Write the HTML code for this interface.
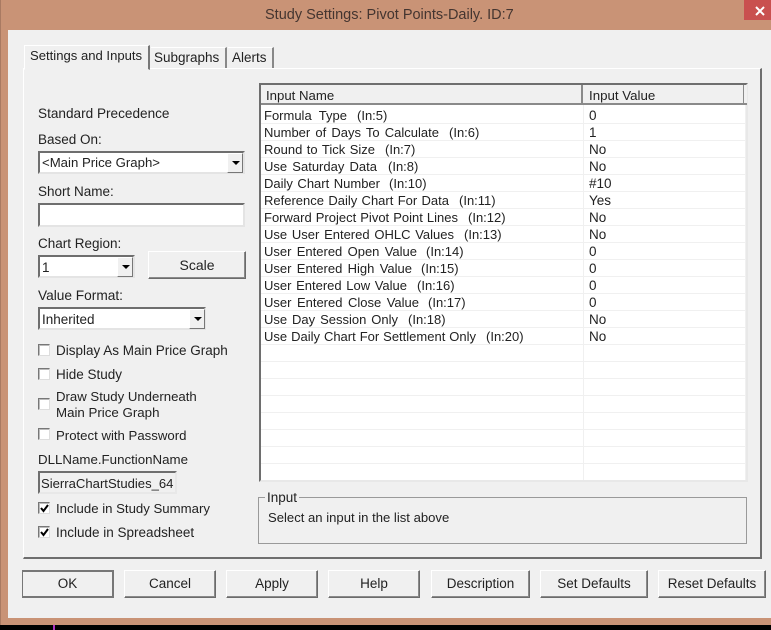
<!DOCTYPE html>
<html><head><meta charset="utf-8"><style>
html,body{margin:0;padding:0;background:#000;}
#r{position:relative;width:771px;height:630px;overflow:hidden;background:#000;font-family:"Liberation Sans",sans-serif;font-size:13.5px;color:#222;}
#r div{position:absolute;box-sizing:border-box;}
.t{white-space:nowrap;line-height:16px;height:16px;}
.n{white-space:normal;line-height:16px;height:16px;left:264px;font-size:13px;text-align:justify;text-align-last:justify;}
.i{white-space:nowrap;line-height:16px;height:16px;font-size:13px;}
.v{white-space:nowrap;line-height:16px;height:16px;left:589px;}
.btn{background:#f0f0f0;border:1px solid;border-color:#fff #6b6b6b #6b6b6b #fff;box-shadow:inset -1px -1px 0 #8a8a8a;text-align:center;line-height:26px;font-size:13.5px;}
.cb{width:12px;height:12px;background:#fff;border:1px solid;border-color:#777 #ddd #ddd #777;box-shadow:inset 1px 1px 0 #bbb;}
.field{background:#fff;border:2px solid;border-color:#6e6e6e #e4e4e4 #e4e4e4 #6e6e6e;}
.arrow{background:#f0f0f0;border:1px solid;border-color:#fff #777 #777 #fff;}
.arrow:after{content:"";position:absolute;left:4px;top:7px;border:4px solid transparent;border-top:4px solid #000;border-bottom:0;}
.ln{height:1px;left:261px;width:484px;background:#f0f0f0;}
</style></head><body><div id="r">
<div style="left:0;top:0;width:771px;height:625px;background:#c99376"></div>
<div style="left:0;top:0;width:1px;height:625px;background:#a97a62"></div>
<div style="left:53px;top:625px;width:2px;height:5px;background:#b030c0"></div>
<div style="left:744px;top:0;width:27px;height:20px;background:#c9504f"></div>
<svg style="position:absolute;left:754px;top:5px" width="12" height="12"><path d="M2 2L10 10M10 2L2 10" stroke="#fff" stroke-width="2"/></svg>
<div class="t" style="left:265px;top:7px;font-size:14.5px;color:#443530">Study Settings: Pivot Points-Daily. ID:7</div>
<div style="left:8px;top:30px;width:763px;height:588px;background:#f0f0f0"></div>

<div style="left:23px;top:68px;width:739px;height:491px;border:1px solid;border-color:#fff #6e6e6e #6e6e6e #fff;border-width:1px 2px 2px 1px"></div>
<div style="left:24px;top:45px;width:126px;height:25px;background:#f0f0f0;border:1px solid;border-color:#fff #777 transparent #fff;border-right-width:2px"></div>
<div style="left:151px;top:47px;width:76px;height:21px;border-right:2px solid #888;border-top:1px solid #fff"></div>
<div style="left:228px;top:47px;width:46px;height:21px;border-right:2px solid #888;border-top:1px solid #fff"></div>
<div class="t" style="left:30px;top:48px;font-size:13.1px">Settings and Inputs</div>
<div class="t" style="left:154px;top:50px">Subgraphs</div>
<div class="t" style="left:232px;top:50px">Alerts</div>

<div class="t" style="left:38px;top:106px;font-size:13.6px">Standard Precedence</div>
<div class="t" style="left:38px;top:132px">Based On:</div>
<div class="field" style="left:38px;top:151px;width:207px;height:23px"></div>
<div class="t" style="left:42px;top:155px;font-size:13.2px;top:155px">&lt;Main Price Graph&gt;</div>
<div class="arrow" style="left:227px;top:153px;width:16px;height:20px"></div>
<div class="t" style="left:38px;top:184px">Short Name:</div>
<div class="field" style="left:38px;top:203px;width:207px;height:24px"></div>
<div class="t" style="left:38px;top:236px">Chart Region:</div>
<div class="field" style="left:38px;top:255px;width:97px;height:23px"></div>
<div class="t" style="left:42px;top:260px">1</div>
<div class="arrow" style="left:117px;top:257px;width:16px;height:20px"></div>
<div class="btn" style="left:148px;top:251px;width:98px;height:28px;font-size:14px">Scale</div>
<div class="t" style="left:38px;top:288px;font-size:13.7px">Value Format:</div>
<div class="field" style="left:38px;top:307px;width:168px;height:23px"></div>
<div class="t" style="left:42px;top:312px">Inherited</div>
<div class="arrow" style="left:189px;top:309px;width:16px;height:20px"></div>

<div class="cb" style="left:38px;top:344px"></div><div class="t" style="left:56px;top:343px">Display As Main Price Graph</div>
<div class="cb" style="left:38px;top:368px"></div><div class="t" style="left:56px;top:367px">Hide Study</div>
<div class="cb" style="left:38px;top:398px"></div>
<div class="t" style="left:56px;top:389px;font-size:13.2px">Draw Study Underneath</div>
<div class="t" style="left:56px;top:405px;font-size:13.3px">Main Price Graph</div>
<div class="cb" style="left:38px;top:428px"></div><div class="t" style="left:56px;top:428px;font-size:13.2px">Protect with Password</div>
<div class="t" style="left:38px;top:452px;font-size:13.3px">DLLName.FunctionName</div>
<div style="left:38px;top:471px;width:139px;height:23px;background:#f0f0f0;border:2px solid;border-color:#6e6e6e #e8e8e8 #e8e8e8 #6e6e6e"></div>
<div class="t" style="left:41px;top:476px;font-size:13.1px">SierraChartStudies_64</div>
<div class="cb" style="left:38px;top:502px"></div>
<svg style="position:absolute;left:39px;top:503px" width="11" height="11"><path d="M2 5L4.5 8L9 2" fill="none" stroke="#000" stroke-width="2"/></svg>
<div class="t" style="left:56px;top:501px;font-size:13.2px">Include in Study Summary</div>
<div class="cb" style="left:38px;top:526px"></div>
<svg style="position:absolute;left:39px;top:527px" width="11" height="11"><path d="M2 5L4.5 8L9 2" fill="none" stroke="#000" stroke-width="2"/></svg>
<div class="t" style="left:56px;top:525px">Include in Spreadsheet</div>

<div style="left:259px;top:83px;width:489px;height:399px;background:#fff;border:2px solid;border-color:#6e6e6e #e8e8e8 #e8e8e8 #6e6e6e"></div>
<div style="left:261px;top:85px;width:486px;height:20px;background:#f0f0f0;border-bottom:2px solid #8a8a8a"></div>
<div style="left:581px;top:85px;width:2px;height:19px;background:#8a8a8a"></div>
<div style="left:743px;top:85px;width:1px;height:19px;background:#8a8a8a"></div>
<div class="t" style="left:266px;top:88px;font-size:13.2px">Input Name</div>
<div class="t" style="left:589px;top:88px;font-size:13.3px">Input Value</div>
<div style="left:583px;top:105px;width:1px;height:375px;background:#f0f0f0"></div>
<div style="left:745px;top:105px;width:1px;height:375px;background:#f0f0f0"></div>

<div class="ln" style="top:123px"></div><div class="ln" style="top:140px"></div><div class="ln" style="top:157px"></div><div class="ln" style="top:174px"></div><div class="ln" style="top:191px"></div><div class="ln" style="top:208px"></div><div class="ln" style="top:225px"></div><div class="ln" style="top:242px"></div><div class="ln" style="top:259px"></div><div class="ln" style="top:276px"></div><div class="ln" style="top:293px"></div><div class="ln" style="top:310px"></div><div class="ln" style="top:327px"></div><div class="ln" style="top:344px"></div><div class="ln" style="top:361px"></div><div class="ln" style="top:378px"></div><div class="ln" style="top:395px"></div><div class="ln" style="top:412px"></div><div class="ln" style="top:429px"></div><div class="ln" style="top:446px"></div><div class="ln" style="top:463px"></div>

<div class="n" style="top:108px;width:83px">Formula Type</div><div class="i" style="left:357px;top:108px">(In:5)</div><div class="v" style="top:108px">0</div>
<div class="n" style="top:125px;width:175px">Number of Days To Calculate</div><div class="i" style="left:449px;top:125px">(In:6)</div><div class="v" style="top:125px">1</div>
<div class="n" style="top:142px;width:111px">Round to Tick Size</div><div class="i" style="left:385px;top:142px">(In:7)</div><div class="v" style="top:142px">No</div>
<div class="n" style="top:159px;width:113px">Use Saturday Data</div><div class="i" style="left:388px;top:159px">(In:8)</div><div class="v" style="top:159px">No</div>
<div class="n" style="top:176px;width:116px">Daily Chart Number</div><div class="i" style="left:389px;top:176px">(In:10)</div><div class="v" style="top:176px">#10</div>
<div class="n" style="top:193px;width:185px">Reference Daily Chart For Data</div><div class="i" style="left:459px;top:193px">(In:11)</div><div class="v" style="top:193px">Yes</div>
<div class="n" style="top:210px;width:194px">Forward Project Pivot Point Lines</div><div class="i" style="left:468px;top:210px">(In:12)</div><div class="v" style="top:210px">No</div>
<div class="n" style="top:227px;width:190px">Use User Entered OHLC Values</div><div class="i" style="left:464px;top:227px">(In:13)</div><div class="v" style="top:227px">No</div>
<div class="n" style="top:244px;width:153px">User Entered Open Value</div><div class="i" style="left:426px;top:244px">(In:14)</div><div class="v" style="top:244px">0</div>
<div class="n" style="top:261px;width:148px">User Entered High Value</div><div class="i" style="left:421px;top:261px">(In:15)</div><div class="v" style="top:261px">0</div>
<div class="n" style="top:278px;width:143px">User Entered Low Value</div><div class="i" style="left:417px;top:278px">(In:16)</div><div class="v" style="top:278px">0</div>
<div class="n" style="top:295px;width:155px">User Entered Close Value</div><div class="i" style="left:428px;top:295px">(In:17)</div><div class="v" style="top:295px">0</div>
<div class="n" style="top:312px;width:134px">Use Day Session Only</div><div class="i" style="left:408px;top:312px">(In:18)</div><div class="v" style="top:312px">No</div>
<div class="n" style="top:329px;width:212px">Use Daily Chart For Settlement Only</div><div class="i" style="left:486px;top:329px">(In:20)</div><div class="v" style="top:329px">No</div>

<div style="left:258px;top:497px;width:489px;height:47px;border:1px solid #9a9a9a"></div>
<div class="t" style="left:265px;top:490px;background:#f0f0f0;padding:0 2px;height:15px">Input</div>
<div class="t" style="left:268px;top:510px;font-size:13.1px">Select an input in the list above</div>

<div class="btn" style="left:22px;top:570px;width:92px;height:28px;border-color:#777;border-width:2px 2px 2px 1px;box-shadow:none;line-height:24px">OK</div>
<div class="btn" style="left:124px;top:570px;width:92px;height:28px">Cancel</div>
<div class="btn" style="left:226px;top:570px;width:92px;height:28px">Apply</div>
<div class="btn" style="left:328px;top:570px;width:92px;height:28px">Help</div>
<div class="btn" style="left:431px;top:570px;width:99px;height:28px">Description</div>
<div class="btn" style="left:540px;top:570px;width:108px;height:28px">Set Defaults</div>
<div class="btn" style="left:658px;top:570px;width:108px;height:28px">Reset Defaults</div>
</div></body></html>
